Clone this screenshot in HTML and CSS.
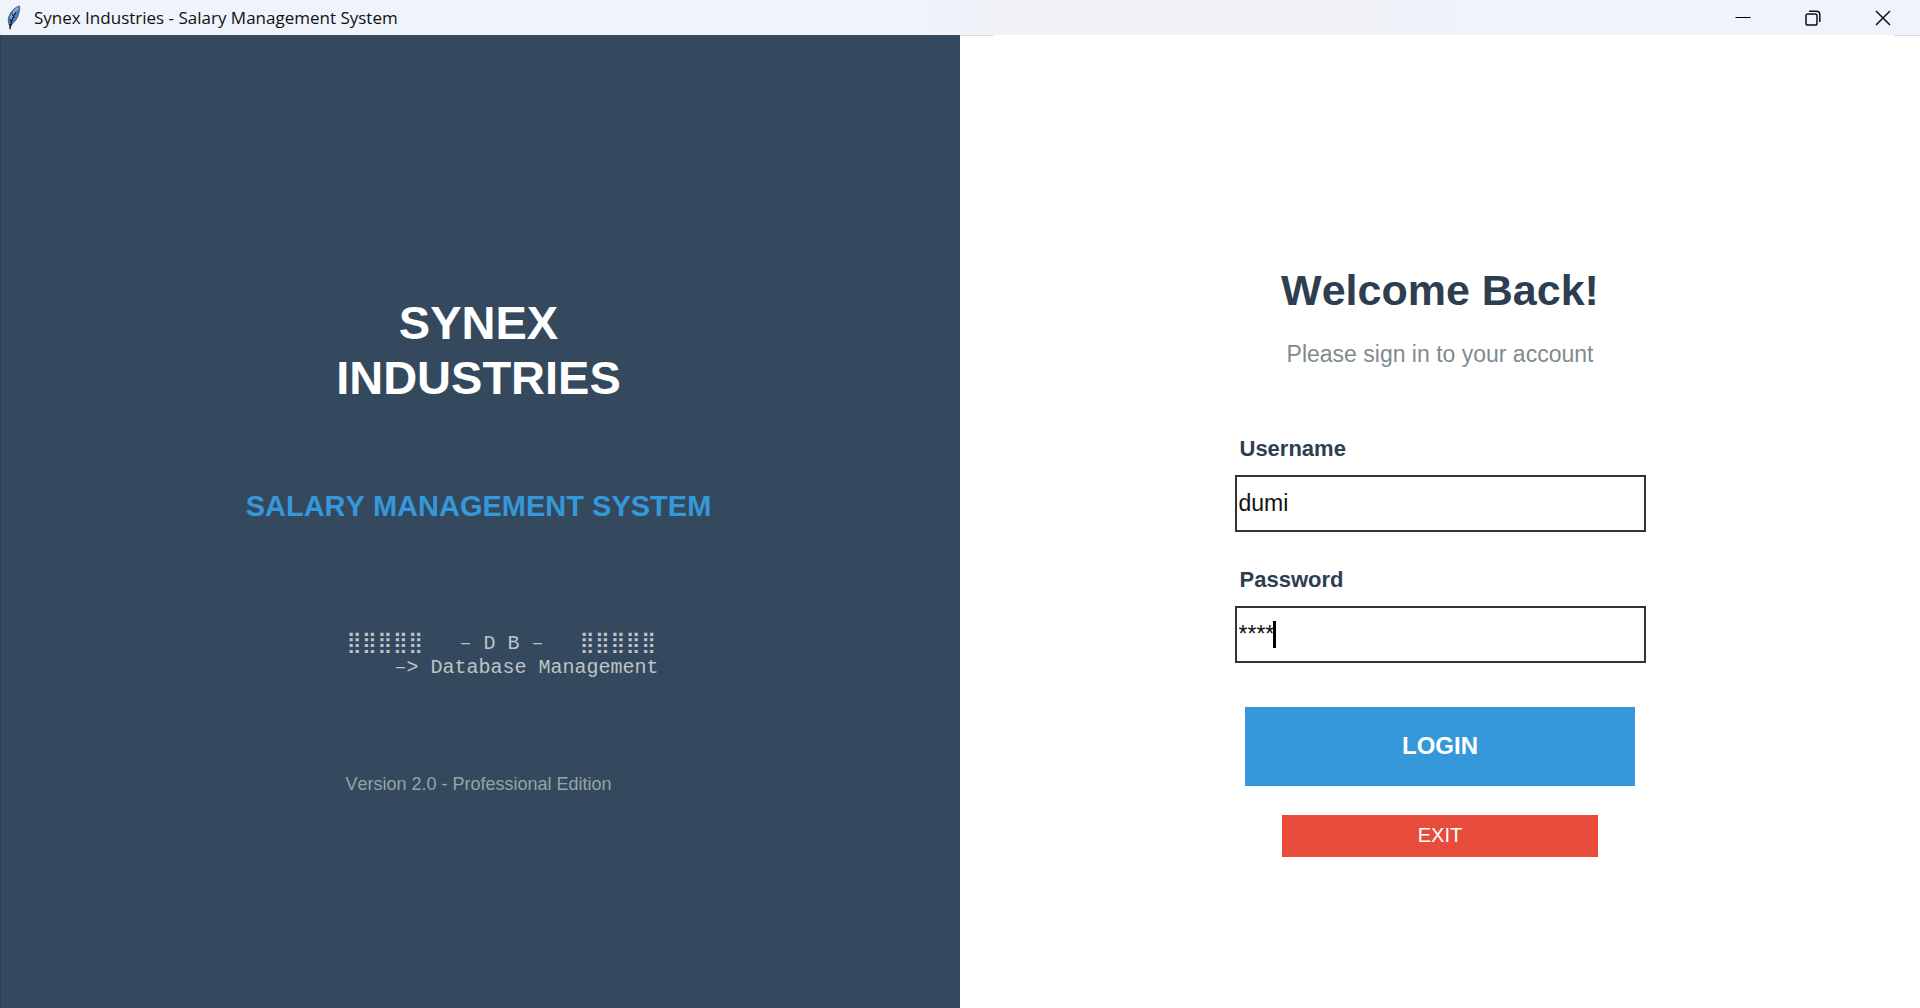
FILE: index.html
```html
<!DOCTYPE html>
<html lang="en">
<head>
<meta charset="utf-8">
<title>Synex Industries - Salary Management System</title>
<link rel="stylesheet" href="styles.css">
</head>
<body>
<header class="titlebar">
  <svg class="feather" width="16" height="26" viewBox="0 0 16 26" aria-hidden="true">
    <path d="M13.500 1C9 2 4 7 2.500 13c-.5 3 0 5 1 7.500C8 19 12 13 13 7.500c.6-2.500 1-4.500.5-6.500z" fill="#4580c4" stroke="#5a6068" stroke-width="1"/>
    <path d="M12 3C8.500 6 6 10 5 14" fill="none" stroke="#7db4ee" stroke-width="2"/>
    <path d="M10 7C7 11 5 16 4 24" fill="none" stroke="#15181d" stroke-width="1.200"/>
    <path d="M6 8l1 3M9 12l-3 1M4 14l1 3" fill="none" stroke="#1d2c40" stroke-width="1"/>
    <path d="M3 19l1 6 2-6z" fill="#222"/>
  </svg>
  <span class="caption">Synex Industries - Salary Management System</span>
  <div class="controls">
    <button class="control" type="button" aria-label="Minimize"><svg width="16" height="16" viewBox="0 0 16 16"><path d="M.5 7.500h15" stroke="#000" fill="none"/></svg></button>
    <button class="control" type="button" aria-label="Restore"><svg width="16" height="16" viewBox="0 0 16 16" fill="none" stroke="#111" stroke-width="1.500"><rect x="1" y="4" width="11" height="11" rx="1.800"/><path d="M4 1.200h7.500a3.300 3.300 0 0 1 3.300 3.300V12"/></svg></button>
    <button class="control" type="button" aria-label="Close"><svg width="16" height="16" viewBox="0 0 16 16"><path d="M1 1l14 14M15 1L1 15" stroke="#111" stroke-width="1.500" fill="none"/></svg></button>
  </div>
</header>
<main class="window">
  <section class="brand">
    <h1 class="company">SYNEX<br>INDUSTRIES</h1>
    <p class="product">SALARY MANAGEMENT SYSTEM</p>
    <pre class="emblem">    <span class="dots">⣿⣿⣿⣿⣿</span>   – D B –   <span class="dots">⣿⣿⣿⣿⣿</span>
        –&gt; Database Management</pre>
    <p class="version">Version 2.0 - Professional Edition</p>
  </section>
  <section class="signin">
    <h2 class="welcome">Welcome Back!</h2>
    <p class="hint">Please sign in to your account</p>
    <form class="form">
      <div class="group">
        <label class="label" for="username">Username</label>
        <input class="field" id="username" type="text" value="dumi">
      </div>
      <div class="group">
        <label class="label" for="password">Password</label>
        <div class="entry">
          <input class="field" id="password" type="text" value="****" autocomplete="off">
          <span class="caret"></span>
        </div>
      </div>
      <button class="login" type="button">LOGIN</button>
      <button class="exit" type="button">EXIT</button>
    </form>
  </section>
</main>
</body>
</html>
```
FILE: styles.css
```css
* {
  box-sizing: border-box;
}

body {
  margin: 0;
  min-height: 100vh;
  display: flex;
  flex-direction: column;
  background: #fff;
  font-family: "Liberation Sans", Arial, sans-serif;
  font-kerning: none;
}

h1, h2, p, pre {
  margin: 0;
}

.titlebar {
  display: flex;
  align-items: center;
  height: 35px;
  padding: 0 2px 0 6px;
  background: linear-gradient(90deg, #eff3fb 0%, #eff3fb 48%, #f1f2f6 54%, #f1f2f6 68%, #eff3fb 76%);
}

.feather {
  flex: none;
  margin-right: 12px;
}

.caption {
  font-family: "Open Sans", "Noto Sans", sans-serif;
  font-size: 17px;
  line-height: 24px;
  color: #111;
}

.controls {
  display: flex;
  margin-left: auto;
}

.control {
  display: flex;
  align-items: center;
  justify-content: center;
  width: 70px;
  height: 34px;
  padding: 0;
  border: 0;
  background: none;
}

.window {
  flex: 1;
  display: grid;
  grid-template-columns: 1fr 1fr;
}

.brand,
.signin {
  display: flex;
  flex-direction: column;
  align-items: center;
  justify-content: center;
}

.brand {
  padding: 47px 4px 0 0;
  background: #34495e;
  border-left: 1px solid #2c3e50;
}

.company {
  font-size: 47px;
  line-height: 55px;
  color: #fff;
  text-align: center;
}

.product {
  margin-top: 84px;
  font-size: 29px;
  line-height: 34px;
  font-weight: bold;
  color: #3498db;
}

.emblem {
  margin-top: 109px;
  font-family: "Liberation Mono", "Courier New", monospace;
  font-size: 20px;
  line-height: 24px;
  color: #bdc3c7;
}

.dots {
  font-family: "DejaVu Sans", sans-serif;
  font-size: 21px;
  line-height: 1;
}

.version {
  margin-top: 93px;
  font-size: 18px;
  line-height: 22px;
  color: #95a5a6;
}

.signin {
  padding-top: 78px;
  background:
    linear-gradient(#d8d9dd, #d8d9dd) left top / 33px 1px no-repeat,
    linear-gradient(#d8d9dd, #d8d9dd) right top / 26px 1px no-repeat,
    #fff;
}

.welcome {
  font-size: 43px;
  line-height: 50px;
  color: #2c3e50;
}

.hint {
  margin-top: 25px;
  font-size: 23px;
  line-height: 28px;
  color: #7f8c8d;
}

.form {
  display: flex;
  flex-direction: column;
  align-items: center;
  width: 100%;
  max-width: 411px;
  margin-top: 69px;
}

.group {
  display: flex;
  flex-direction: column;
  gap: 14px;
  width: 100%;
}

.group + .group {
  margin-top: 36px;
}

.label {
  padding-left: 5px;
  font-size: 22px;
  line-height: 24px;
  font-weight: bold;
  color: #2c3e50;
}

.field {
  display: block;
  width: 100%;
  height: 57px;
  padding: 0 2px;
  border: 2px solid #333;
  border-radius: 0;
  background: #fff;
  color: #111;
  font: 23px "Liberation Sans", Arial, sans-serif;
  outline: none;
}

.entry {
  position: relative;
}

.caret {
  position: absolute;
  left: 38px;
  top: 15px;
  width: 3px;
  height: 27px;
  background: #000;
}

.login,
.exit {
  padding: 0;
  border: 0;
  color: #fff;
  font-family: inherit;
}

.login {
  width: 95%;
  height: 79px;
  margin-top: 44px;
  background: #3498db;
  font-size: 24px;
  font-weight: bold;
}

.exit {
  width: 77%;
  height: 42px;
  margin-top: 29px;
  background: #e74c3c;
  font-size: 20px;
}
```
